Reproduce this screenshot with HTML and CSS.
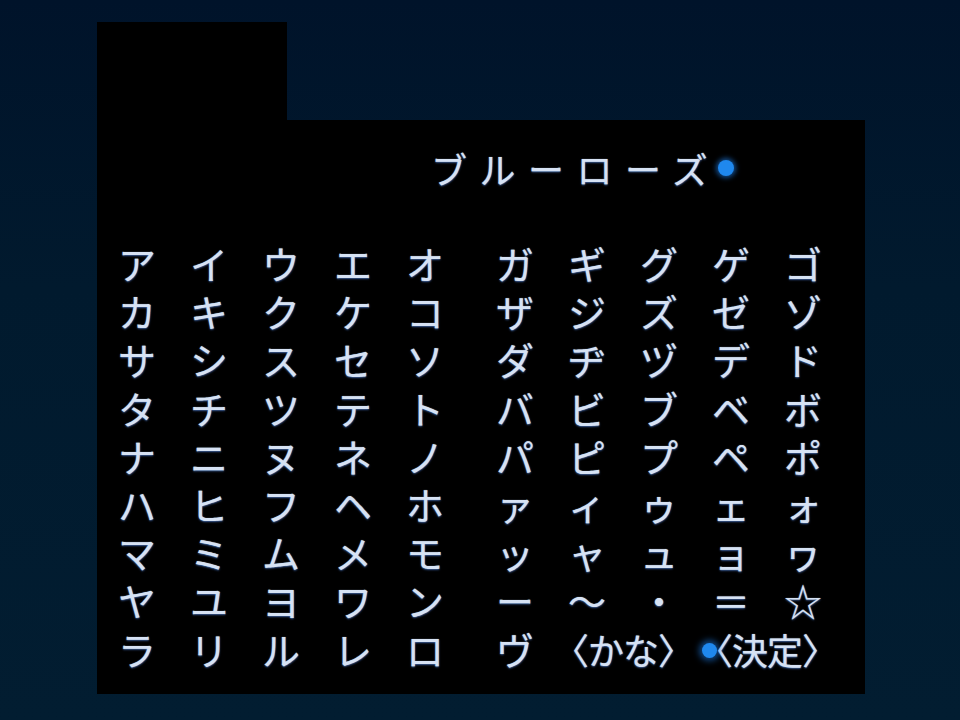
FILE: index.html
```html
<!DOCTYPE html>
<html lang="ja">
<head>
<meta charset="utf-8">
<link rel="stylesheet" href="styles.css">
</head>
<body>
<div class="screen">
  <div class="panel">
    <div class="tab"></div>
    <div class="main">
      <div class="title"><span class="name">ブルーローズ</span><span class="cursor"></span></div>
      <div class="board">
        <div class="block">
          <span>ア</span><span>イ</span><span>ウ</span><span>エ</span><span>オ</span>
          <span>カ</span><span>キ</span><span>ク</span><span>ケ</span><span>コ</span>
          <span>サ</span><span>シ</span><span>ス</span><span>セ</span><span>ソ</span>
          <span>タ</span><span>チ</span><span>ツ</span><span>テ</span><span>ト</span>
          <span>ナ</span><span>ニ</span><span>ヌ</span><span>ネ</span><span>ノ</span>
          <span>ハ</span><span>ヒ</span><span>フ</span><span>ヘ</span><span>ホ</span>
          <span>マ</span><span>ミ</span><span>ム</span><span>メ</span><span>モ</span>
          <span>ヤ</span><span>ユ</span><span>ヨ</span><span>ワ</span><span>ン</span>
          <span>ラ</span><span>リ</span><span>ル</span><span>レ</span><span>ロ</span>
        </div>
        <div class="block">
          <span>ガ</span><span>ギ</span><span>グ</span><span>ゲ</span><span>ゴ</span>
          <span>ザ</span><span>ジ</span><span>ズ</span><span>ゼ</span><span>ゾ</span>
          <span>ダ</span><span>ヂ</span><span>ヅ</span><span>デ</span><span>ド</span>
          <span>バ</span><span>ビ</span><span>ブ</span><span>ベ</span><span>ボ</span>
          <span>パ</span><span>ピ</span><span>プ</span><span>ペ</span><span>ポ</span>
          <span>ァ</span><span>ィ</span><span>ゥ</span><span>ェ</span><span>ォ</span>
          <span>ッ</span><span>ャ</span><span>ュ</span><span>ョ</span><span>ヮ</span>
          <span>ー</span><span>〜</span><span>・</span><span>＝</span><span>☆</span>
          <span>ヴ</span><span class="wide">〈かな〉</span><span class="wide selected">〈決定〉</span>
        </div>
      </div>
    </div>
  </div>
</div>
</body>
</html>
```
FILE: styles.css
```css
html, body {
  margin: 0;
  padding: 0;
}
body {
  width: 960px;
  height: 720px;
  overflow: hidden;
  background: linear-gradient(180deg, #00132a 0%, #011a2e 40%, #021d31 100%);
  font-family: "Noto Sans CJK JP", "Noto Sans", sans-serif;
}
.screen {
  box-sizing: border-box;
  width: 960px;
  height: 720px;
  padding: 22px 0 0 97px;
}
.panel {
  display: flex;
  flex-direction: column;
  align-items: flex-start;
}
.tab {
  width: 190px;
  height: 98px;
  background: #000;
}
.main {
  box-sizing: border-box;
  width: 768px;
  height: 574px;
  background: #000;
  padding: 24px 0 0 4px;
}
.title {
  display: flex;
  align-items: center;
  height: 48px;
  padding-left: 330px;
}
.name, .block span {
  color: #d6e2f4;
  text-shadow: 0 1px 2px rgba(90, 150, 255, 0.55), 0 0 1px rgba(255, 255, 255, 0.6);
}
.name {
  font-size: 36px;
  line-height: 48px;
  letter-spacing: 12.5px;
}
.cursor {
  width: 16px;
  height: 16px;
  border-radius: 50%;
  background: #1f88ee;
  box-shadow: 0 0 5px 2px rgba(30, 130, 240, 0.6);
  margin-left: -2px;
}
.board {
  display: flex;
  gap: 18px;
  margin-top: 47px;
}
.block {
  display: grid;
  grid-template-columns: repeat(5, 72px);
  grid-auto-rows: 48.2px;
}
.block span {
  font-size: 38px;
  line-height: 48px;
  text-align: center;
}
.block span.wide {
  grid-column: span 2;
  font-size: 36px;
  letter-spacing: -1px;
}
.selected {
  position: relative;
}
.selected::before {
  content: "";
  position: absolute;
  left: 7px;
  top: 18px;
  width: 15px;
  height: 15px;
  border-radius: 50%;
  background: #1f88ee;
  box-shadow: 0 0 6px 3px rgba(30, 130, 240, 0.55);
}
```
